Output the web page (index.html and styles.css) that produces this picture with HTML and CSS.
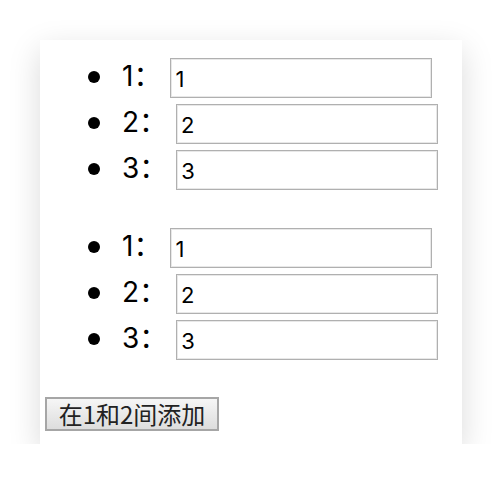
FILE: index.html
```html
<!DOCTYPE html>
<html lang="zh-CN">
<head>
<meta charset="utf-8">
<title>列表</title>
<link rel="stylesheet" href="styles.css">
</head>
<body>
<div class="card">
  <ul class="list">
    <li class="item"><span class="label">1：</span><input class="field" type="text" value="1"></li>
    <li class="item"><span class="label">2：</span><input class="field" type="text" value="2"></li>
    <li class="item"><span class="label">3：</span><input class="field" type="text" value="3"></li>
  </ul>
  <ul class="list">
    <li class="item"><span class="label">1：</span><input class="field" type="text" value="1"></li>
    <li class="item"><span class="label">2：</span><input class="field" type="text" value="2"></li>
    <li class="item"><span class="label">3：</span><input class="field" type="text" value="3"></li>
  </ul>
  <button class="add-btn" type="button">在1和2间添加</button>
</div>
</body>
</html>
```

FILE: styles.css
```css
html, body {
  margin: 0;
  padding: 0;
  background: #ffffff;
}

body {
  padding: 40px 0 0 40px;
  font-family: Inter, "Noto Sans CJK SC", sans-serif;
  color: #000;
}

.card {
  width: 417px;
  padding: 15px 0 13px 5px;
  background: #ffffff;
  box-shadow: 0 10px 30px rgba(0, 0, 0, 0.15);
  display: flex;
  flex-direction: column;
  align-items: flex-start;
}

.list {
  list-style: none;
  margin: 0;
  padding: 0 0 0 43px;
}

.list + .list {
  margin-top: 32px;
}

.item {
  height: 46px;
  display: flex;
  align-items: center;
}

.item::before {
  content: "";
  width: 12px;
  height: 12px;
  border-radius: 50%;
  background: #000;
  margin-right: 22px;
  margin-top: -2px;
}

.label {
  font-family: Inter, "Noto Sans CJK SC", sans-serif;
  font-size: 28px;
  line-height: 1;
  margin-top: -4px;
  margin-right: 9px;
}

.field {
  box-sizing: border-box;
  width: 262px;
  height: 40px;
  margin: 0;
  padding: 2px 4px 0;
  border: 1px solid #b0b0b0;
  box-shadow: inset 0 0 0 1px #e8e8e8;
  border-radius: 0;
  background: #fff;
  font-family: Inter, "Liberation Sans", sans-serif;
  font-size: 22px;
  color: #000;
  outline: none;
}

.add-btn {
  margin-top: 34px;
  box-sizing: border-box;
  width: 174px;
  height: 34px;
  padding: 0;
  border: 2px solid #a6a6a6;
  border-radius: 0;
  background: linear-gradient(#f6f6f6, #dddddd);
  font-family: "Noto Sans CJK SC", sans-serif;
  font-size: 24px;
  line-height: 1;
  color: #222;
}
```
